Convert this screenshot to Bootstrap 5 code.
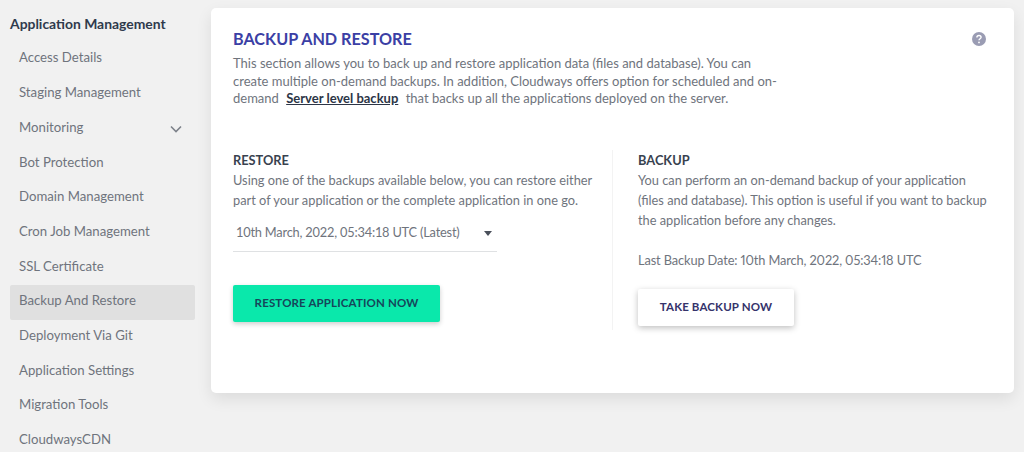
<!DOCTYPE html>
<html lang="en">
<head>
    <meta charset="UTF-8">
    <meta name="viewport" content="width=device-width, initial-scale=1.0">
    <title>Backup And Restore</title>
    <link href="https://cdn.jsdelivr.net/npm/bootstrap@5.3.0/dist/css/bootstrap.min.css" rel="stylesheet">
    <style>
        body {
            font-family: "Lato", "Liberation Sans", sans-serif;
            background-color: #f1f1f1;
            color: #6f747d;
            font-size: 13.2px;
            font-variant-numeric: proportional-nums;
            height: 452px;
            overflow: hidden;
        }
        .side-panel {
            width: 211px;
            flex: none;
            padding: 15px 16px 0 10px;
        }
        .side-title {
            font-size: 13.9px;
            font-weight: 700;
            color: #2f3a4c;
            line-height: 18px;
            margin-bottom: 8px;
        }
        .side-link {
            display: flex;
            justify-content: space-between;
            align-items: center;
            height: 34.7px;
            padding: 0 9px;
            color: #6f747d;
            text-decoration: none;
            border-radius: 2px;
        }
        .side-link svg {
            margin: 3px 4px 0 0;
        }
        .side-link.active {
            background-color: #e0e0e0;
            color: #6f747d;
            margin: 1px 0 -1px;
            padding-bottom: 3px;
        }
        .main-card {
            width: 803px;
            height: 385px;
            margin-top: 8px;
            border: 0;
            border-radius: 5px;
            box-shadow: 0 6px 16px rgba(0, 0, 0, .09);
            padding: 21px 22px 0;
            color: #6f747d;
        }
        .main-title {
            font-size: 16.2px;
            font-weight: 700;
            color: #3b3fa5;
            line-height: 20px;
            margin-bottom: 6px;
        }
        .intro-text {
            width: 545px;
            font-size: 13px;
            line-height: 17.5px;
            margin-bottom: 42px;
        }
        .intro-text a {
            color: #2c3546;
            font-weight: 700;
            margin: 0 4px;
        }
        .help-icon {
            position: absolute;
            top: 24px;
            right: 28px;
        }
        .block-title {
            font-size: 12.8px;
            font-weight: 700;
            color: #38424f;
            line-height: 20px;
        }
        .block-text {
            font-size: 12.8px;
            line-height: 20px;
            margin-bottom: 0;
        }
        .date-line {
            letter-spacing: -.12px;
        }
        .restore-col {
            width: 380px;
            height: 180px;
            padding-right: 10px;
            border-right: 1px solid #f3f3f3;
        }
        .backup-col {
            padding-left: 25px;
            flex: 1;
        }
        .date-select {
            width: 264px;
            height: 38px;
            margin-top: 4px;
            padding: 2px 3px 0;
            color: #6f747d;
            border: 0;
            border-bottom: 1px solid #dfe1e3;
            border-radius: 0;
            font-size: 12.8px;
            letter-spacing: -.2px;
        }
        .date-select::after {
            border-top: 5px solid #4a505b;
            border-left: 4.5px solid transparent;
            border-right: 4.5px solid transparent;
            margin-right: 2px;
        }
        .restore-btn, .backup-btn {
            font-size: 11.5px;
            font-weight: 700;
            letter-spacing: .15px;
            border: 0;
            border-radius: 2px;
            height: 37px;
        }
        .restore-btn {
            width: 207px;
            margin-top: 33px;
            background-color: #0ae8ab;
            color: #16465a;
            box-shadow: 0 2px 5px rgba(0, 0, 0, .2);
        }
        .backup-btn {
            width: 156px;
            margin-top: 19px;
            background-color: #fff;
            color: #35336b;
            box-shadow: 0 2px 6px rgba(0, 0, 0, .25);
        }
    </style>
</head>
<body>
    <div class="d-flex">
        <!-- Sidebar -->
        <div class="side-panel">
            <div class="side-title">Application Management</div>
            <nav class="d-flex flex-column">
                <a class="side-link" href="#">Access Details</a>
                <a class="side-link" href="#">Staging Management</a>
                <a class="side-link" href="#">Monitoring
                    <svg width="12" height="8" viewBox="0 0 12 8" fill="none" stroke="#7d828a" stroke-width="1.6"><path d="M1 1.5l5 5 5-5"/></svg>
                </a>
                <a class="side-link" href="#">Bot Protection</a>
                <a class="side-link" href="#">Domain Management</a>
                <a class="side-link" href="#">Cron Job Management</a>
                <a class="side-link" href="#">SSL Certificate</a>
                <a class="side-link active" href="#">Backup And Restore</a>
                <a class="side-link" href="#">Deployment Via Git</a>
                <a class="side-link" href="#">Application Settings</a>
                <a class="side-link" href="#">Migration Tools</a>
                <a class="side-link" href="#">CloudwaysCDN</a>
            </nav>
        </div>

        <!-- Main content -->
        <div class="card main-card">
            <svg class="help-icon" width="14" height="14" viewBox="0 0 14 14">
                <circle cx="7" cy="7" r="7" fill="#9a9cb3"/>
                <path d="M4.9 5.4c0-1.2 1-1.9 2.1-1.9s2.1.7 2.1 1.8c0 1.5-2.1 1.5-2.1 3" fill="none" stroke="#fff" stroke-width="1.4"/>
                <circle cx="7" cy="10.4" r=".9" fill="#fff"/>
            </svg>
            <h2 class="main-title">BACKUP AND RESTORE</h2>
            <p class="intro-text">This section allows you to back up and restore application data (files and database). You can create multiple on-demand backups. In addition, Cloudways offers option for scheduled and on-demand <a href="#">Server level backup</a> that backs up all the applications deployed on the server.</p>
            <div class="d-flex">
                <div class="restore-col">
                    <div class="block-title">RESTORE</div>
                    <p class="block-text">Using one of the backups available below, you can restore either part of your application or the complete application in one go.</p>
                    <button class="btn dropdown-toggle date-select d-flex justify-content-between align-items-center" type="button">10th March, 2022, 05:34:18 UTC (Latest)</button>
                    <button class="btn restore-btn d-block" type="button">RESTORE APPLICATION NOW</button>
                </div>
                <div class="backup-col">
                    <div class="block-title">BACKUP</div>
                    <p class="block-text">You can perform an on-demand backup of your application (files and database). This option is useful if you want to backup the application before any changes.</p>
                    <p class="block-text date-line mt-3 pt-1">Last Backup Date: 10th March, 2022, 05:34:18 UTC</p>
                    <button class="btn backup-btn d-block" type="button">TAKE BACKUP NOW</button>
                </div>
            </div>
        </div>
    </div>
    <script src="https://cdn.jsdelivr.net/npm/bootstrap@5.3.0/dist/js/bootstrap.bundle.min.js"></script>
</body>
</html>
